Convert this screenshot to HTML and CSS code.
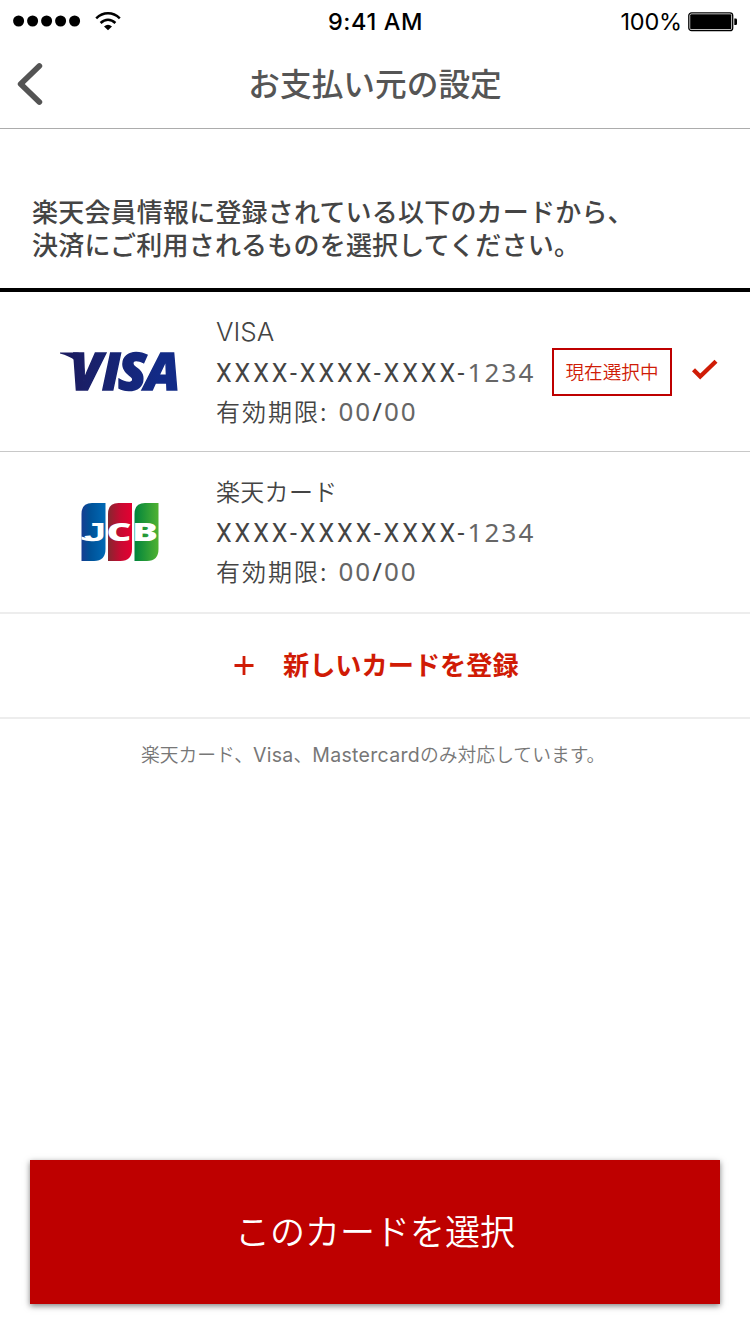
FILE: index.html
```html
<!DOCTYPE html>
<html lang="ja">
<head>
<meta charset="utf-8">
<title>お支払い元の設定</title>
<link rel="stylesheet" href="styles.css">
</head>
<body>
<div class="screen">
  <div class="status-bar">
    <div class="status-left">
      <svg class="signal" width="68" height="12" viewBox="0 0 68 12"><circle cx="5.6" cy="6" r="5.5"/><circle cx="19.6" cy="6" r="5.5"/><circle cx="33.6" cy="6" r="5.5"/><circle cx="47.6" cy="6" r="5.5"/><circle cx="61.6" cy="6" r="5.5"/></svg>
      <svg class="wifi" width="26" height="19" viewBox="0 0 26 19"><path d="M1.2 6.3Q6.5 1.3 13 1.3T24.8 6.3M5.6 11Q9 7.700 13 7.700T20.400 11" fill="none" stroke="#000" stroke-width="2.500"/><path d="M9 14.400Q13 11.200 17 14.400L13 18.300Z"/></svg>
    </div>
    <div class="clock">9:41 AM</div>
    <div class="status-right">
      <span class="percent">100%</span>
      <svg width="50" height="20" viewBox="0 0 50 20"><rect x=".8" y=".8" width="43.900" height="17.900" rx="2.800" fill="none" stroke="#000" stroke-width="1.300"/><rect x="2.200" y="2.200" width="41.100" height="15.100" rx="1"/><path d="M46.300 6.500h1.500q1.200 0 1.200 1.200v4.100q0 1.200-1.200 1.200h-1.500z"/></svg>
    </div>
  </div>

  <header class="nav">
    <svg class="back" width="28" height="44" viewBox="0 0 28 44"><path d="M23.300 4 4.700 22 23.300 40" fill="none" stroke="#545454" stroke-width="5.800" stroke-linecap="round" stroke-linejoin="round"/></svg>
    <h1 class="title">お支払い元の設定</h1>
  </header>

  <p class="lead">楽天会員情報に登録されている以下のカードから、<br>決済にご利用されるものを選択してください。</p>

  <section class="card card-selected">
    <svg class="logo" width="120" height="46" viewBox="0 0 120 46">
      <defs><linearGradient id="visa" gradientUnits="userSpaceOnUse" x1="12" y1="0" x2="100" y2="0"><stop offset="0" stop-color="#1b1d62"/><stop offset="1" stop-color="#122b87"/></linearGradient></defs>
      <path d="M0 3.500H17Q21 3.500 22 8L25 24Q18 9 0 4.500Z" fill="#1b1d62"/>
      <text class="visa-text" x="10 42 58 85" y="41" fill="url(#visa)" stroke="url(#visa)">VISA</text>
    </svg>
    <div class="details">
      <div class="name name-latin">VISA</div>
      <div class="number"><span class="mask">XXXX-XXXX-XXXX-</span><span class="digits">1234</span></div>
      <div class="expiry">有効期限:<span class="date">00<span class="slash">/</span>00</span></div>
    </div>
    <div class="badge">現在選択中</div>
    <svg class="check" width="28" height="24" viewBox="0 0 28 24"><path d="M2.500 11.800 9.200 18.500 25 3.200" fill="none" stroke="#cf1c06" stroke-width="4.300"/></svg>
  </section>

  <section class="card card-plain">
    <svg class="logo" width="120" height="60" viewBox="0 0 120 60">
      <defs>
        <linearGradient id="blue"><stop offset="0" stop-color="#173d91"/><stop offset=".35" stop-color="#005197"/><stop offset="1" stop-color="#0069b5"/></linearGradient>
        <linearGradient id="red"><stop offset="0" stop-color="#84272f"/><stop offset=".5" stop-color="#c50b32"/><stop offset="1" stop-color="#e50032"/></linearGradient>
        <linearGradient id="green"><stop offset="0" stop-color="#00843c"/><stop offset="1" stop-color="#50b232"/></linearGradient>
      </defs>
      <path d="M32 1H45.500V47Q45.500 59 34 59H21.500V12Q21.500 1 32 1Z" fill="url(#blue)"/>
      <path d="M58.500 1H72V47Q72 59 60.500 59H48V12Q48 1 58.500 1Z" fill="url(#red)"/>
      <path d="M85 1H98.500V47Q98.500 59 87 59H74.500V12Q74.500 1 85 1Z" fill="url(#green)"/>
      <path d="M21.500 34.500Q27 37 34 36L36 39Q28 40 21.500 37.500Z" fill="#fff"/>
      <g class="jcb-text"><text class="jcb-j" x="24" y="39" textLength="22" lengthAdjust="spacingAndGlyphs">J</text><text x="46.500" y="39" textLength="25" lengthAdjust="spacingAndGlyphs">C</text><text x="72" y="39" textLength="26" lengthAdjust="spacingAndGlyphs">B</text></g>
    </svg>
    <div class="details">
      <div class="name">楽天カード</div>
      <div class="number"><span class="mask">XXXX-XXXX-XXXX-</span><span class="digits">1234</span></div>
      <div class="expiry">有効期限:<span class="date">00<span class="slash">/</span>00</span></div>
    </div>
  </section>

  <div class="add">
    <svg width="20" height="20" viewBox="0 0 20 20"><path d="M10 0V19M.5 9.500H19.500" stroke="#d01b05" stroke-width="2.800"/></svg>
    <span class="add-label">新しいカードを登録</span>
  </div>

  <p class="note">楽天カード、<span class="note-latin">Visa</span>、<span class="note-latin">Mastercard</span>のみ対応しています。</p>

  <button class="submit">このカードを選択</button>
</div>
</body>
</html>
```
FILE: styles.css
```css
* { box-sizing: border-box; }
body {
  margin: 0;
  background: #fff;
  color: #444;
  font-family: "Noto Sans CJK JP", sans-serif;
}
.screen {
  display: flex;
  flex-direction: column;
  width: 750px;
  height: 1334px;
  overflow: hidden;
}
.status-bar {
  display: grid;
  grid-template-columns: 1fr auto 1fr;
  align-items: center;
  height: 40px;
  padding: 2px 12px 0 13px;
  color: #000;
  font: 400 23.500px/40px Inter, sans-serif;
}
.status-left { display: flex; align-items: center; gap: 14px; padding-bottom: 2px; }
.status-right { display: flex; align-items: center; justify-content: flex-end; gap: 6px; }
.clock { font-weight: 450; font-size: 23.500px; letter-spacing: .6px; }
.percent { letter-spacing: -.2px; }
.nav {
  display: grid;
  grid-template-columns: 60px 1fr 60px;
  align-items: center;
  height: 89px;
  padding: 0 16px;
  border-bottom: 1px solid #acacac;
}
.title {
  margin: 0;
  padding-bottom: 4px;
  color: #555;
  font-size: 31.700px;
  font-weight: 500;
  line-height: 40px;
  text-align: center;
}
.lead {
  height: 163px;
  margin: 0;
  padding: 65px 32px 0;
  border-bottom: 4px solid #000;
  font-size: 26px;
  font-weight: 500;
  letter-spacing: .2px;
  line-height: 33px;
  white-space: nowrap;
}
.card { display: flex; align-items: center; padding-left: 60px; }
.card-selected { height: 160px; border-bottom: 1px solid #c8c8c8; }
.card-plain { height: 162px; border-bottom: 2px solid #ededed; }
.logo { flex: none; overflow: visible; }
.visa-text { font: italic 800 52px "Open Sans", sans-serif; stroke-width: 1.500px; }
.jcb-text { font: 800 25px "Open Sans", sans-serif; fill: #fff; }
.jcb-j { font-family: "Liberation Sans", sans-serif; font-weight: 700; }
.details { width: 372px; padding-left: 36px; white-space: nowrap; }
.name, .number, .expiry { height: 40px; line-height: 40px; font-weight: 350; }
.name { font-size: 24px; line-height: 37px; letter-spacing: .3px; }
.name-latin { font-family: Inter, sans-serif; font-size: 26px; line-height: 40px; letter-spacing: 0; }
.number { font-family: "Noto Sans", sans-serif; font-size: 25px; }
.mask { font-family: Roboto, sans-serif; font-weight: 400; letter-spacing: 2.950px; }
.digits { color: #666; font-size: 26px; font-weight: 400; letter-spacing: 2.200px; }
.expiry { font-size: 24px; line-height: 38px; letter-spacing: 2px; }
.date { margin-left: 10px; color: #666; font-family: "Noto Sans", sans-serif; font-size: 26px; font-weight: 400; letter-spacing: 2px; }
.slash { color: #444; }
.badge {
  width: 120px;
  height: 48px;
  border: 2px solid #be0000;
  color: #cf1c06;
  font-size: 18.600px;
  font-weight: 350;
  line-height: 42px;
  text-align: center;
}
.check { margin: 0 0 3px 19px; }
.add {
  display: flex;
  align-items: center;
  gap: 29px;
  height: 105px;
  padding-left: 234px;
  border-bottom: 2px solid #ededed;
  color: #d01b05;
  font-size: 26.200px;
  font-weight: 700;
}
.add-label { padding-bottom: 3px; }
.note {
  margin: 18px 0 0;
  padding-left: 141px;
  color: #777;
  font-size: 18.800px;
  font-weight: 350;
  line-height: 34px;
  white-space: nowrap;
}
.note-latin { font-family: Inter, sans-serif; font-size: 19.500px; font-weight: 400; letter-spacing: .3px; }
.submit {
  height: 144px;
  margin: auto 30px 30px;
  padding: 0 0 6px;
  border: 0;
  background: #be0000;
  box-shadow: 0 2px 6px rgba(0, 0, 0, .5);
  color: #fff;
  font-family: inherit;
  font-size: 35px;
  font-weight: 350;
}
```
